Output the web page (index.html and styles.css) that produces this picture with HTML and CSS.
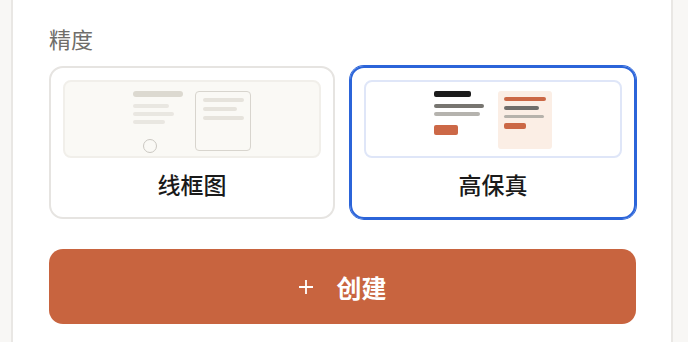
FILE: index.html
```html
<!DOCTYPE html>
<html lang="zh">
<head>
<meta charset="utf-8">
<link rel="stylesheet" href="styles.css">
</head>
<body>
<div class="panel">
  <div class="section-label">精度</div>
  <div class="options">
    <div class="option">
      <div class="preview wire">
        <div class="wf-left">
          <div class="wf-head"></div>
          <div class="wf-line w36"></div>
          <div class="wf-line w41"></div>
          <div class="wf-line w32"></div>
          <div class="wf-circle"></div>
        </div>
        <div class="wf-box">
          <div class="wf-bline w41"></div>
          <div class="wf-bline w34"></div>
          <div class="wf-bline w41"></div>
        </div>
      </div>
      <div class="option-label">线框图</div>
    </div>
    <div class="option selected">
      <div class="preview hifi">
        <div class="hf-left">
          <div class="hf-head"></div>
          <div class="hf-line dark w50"></div>
          <div class="hf-line light w46"></div>
          <div class="hf-btn"></div>
        </div>
        <div class="hf-box">
          <div class="hf-bline orange w42"></div>
          <div class="hf-bline dark w35"></div>
          <div class="hf-bline light w40"></div>
          <div class="hf-sbtn"></div>
        </div>
      </div>
      <div class="option-label">高保真</div>
    </div>
  </div>
  <button class="create-btn">
    <svg class="plus" width="16" height="16" viewBox="0 0 16 16"><path d="M8 1v14M1 8h14" stroke="#fff" stroke-width="1.8" fill="none"/></svg>
    <span>创建</span>
  </button>
</div>
</body>
</html>
```

FILE: styles.css
```css
* { box-sizing: border-box; }
html, body { margin: 0; padding: 0; }
body {
  background: #f8f7f5;
  font-family: "Noto Sans CJK SC", "Noto Sans", sans-serif;
  height: 342px;
  overflow: hidden;
}
.panel {
  margin-left: 11px;
  width: 662px;
  height: 342px;
  background: #fff;
  border-left: 2px solid #e9e7e4;
  border-right: 2px solid #e9e7e4;
  padding: 23px 35px 0 36px;
}
.section-label {
  font-size: 22px;
  line-height: 30px;
  color: #6f6d6a;
  margin-bottom: 13px;
}
.options {
  display: grid;
  grid-template-columns: 1fr 1fr;
  gap: 15px;
}
.option {
  border: 2px solid #e6e4e1;
  border-radius: 14px;
  padding: 12px 12px 17px;
  display: flex;
  flex-direction: column;
  align-items: stretch;
}
.option.selected {
  border-color: #2b64d9;
  box-shadow: 0 0 0 1px #2b64d9;
}
.preview {
  height: 78px;
  border-radius: 8px;
  display: flex;
  justify-content: center;
  gap: 12px;
  padding-top: 9px;
}
.preview.wire {
  background: #faf9f5;
  border: 2px solid #f1efea;
}
.preview.hifi {
  background: #fff;
  border: 2px solid #dfe6f8;
  gap: 14px;
}
.option-label {
  margin-top: 10px;
  text-align: center;
  font-size: 23px;
  font-weight: 500;
  line-height: 32px;
  color: #1a1a1a;
}
/* wireframe preview */
.wf-left { width: 50px; display: flex; flex-direction: column; }
.wf-head { width: 50px; height: 6px; border-radius: 3px; background: #dcd9d0; margin-bottom: 7px; }
.wf-line { height: 4px; border-radius: 2px; background: #e9e7e1; margin-bottom: 4px; }
.wf-circle {
  width: 14px; height: 14px; border-radius: 50%;
  border: 1px solid #cbc8c2; margin: 11px 0 0 10px;
}
.wf-box {
  width: 56px; height: 60px;
  border: 1.5px solid #d8d5ce; border-radius: 4px;
  padding: 6px 6px 0 7px;
}
.wf-bline { height: 4px; border-radius: 2px; background: #e6e3dc; margin-bottom: 5px; }
.w36 { width: 36px; } .w41 { width: 41px; } .w32 { width: 32px; } .w34 { width: 34px; }
/* hifi preview */
.hf-left { width: 50px; display: flex; flex-direction: column; }
.hf-head { width: 37px; height: 6px; border-radius: 2px; background: #1c1c1c; margin-bottom: 7px; }
.hf-line { height: 4px; border-radius: 2px; margin-bottom: 4px; }
.hf-line.dark { background: #777570; }
.hf-line.light { background: #b5b3ae; }
.hf-btn { width: 24px; height: 10px; border-radius: 2px; background: #cc6847; margin-top: 5px; }
.hf-box {
  width: 54px; height: 58px; border-radius: 3px;
  background: #fbeee5; padding: 6px 6px 0 6px;
}
.hf-bline { height: 3.5px; border-radius: 2px; margin-bottom: 5px; }
.hf-bline.orange { background: #cb6846; height: 4px; }
.hf-bline.dark { background: #6f6d6a; }
.hf-bline.light { background: #b6b2ab; }
.hf-sbtn { width: 22px; height: 6px; border-radius: 2px; background: #cb6846; margin-top: 0; }
.w50 { width: 50px; } .w46 { width: 46px; } .w42 { width: 42px; } .w35 { width: 35px; } .w40 { width: 40px; }
.create-btn {
  margin-top: 30px;
  width: 100%;
  height: 75px;
  border: none;
  border-radius: 14px;
  background: #c8643f;
  color: #fff;
  font-family: "Noto Sans CJK SC", "Noto Sans", sans-serif;
  font-size: 25px;
  font-weight: 700;
  display: flex;
  align-items: center;
  justify-content: center;
  gap: 22px;
  padding: 0;
}
.plus { display: block; }
```
